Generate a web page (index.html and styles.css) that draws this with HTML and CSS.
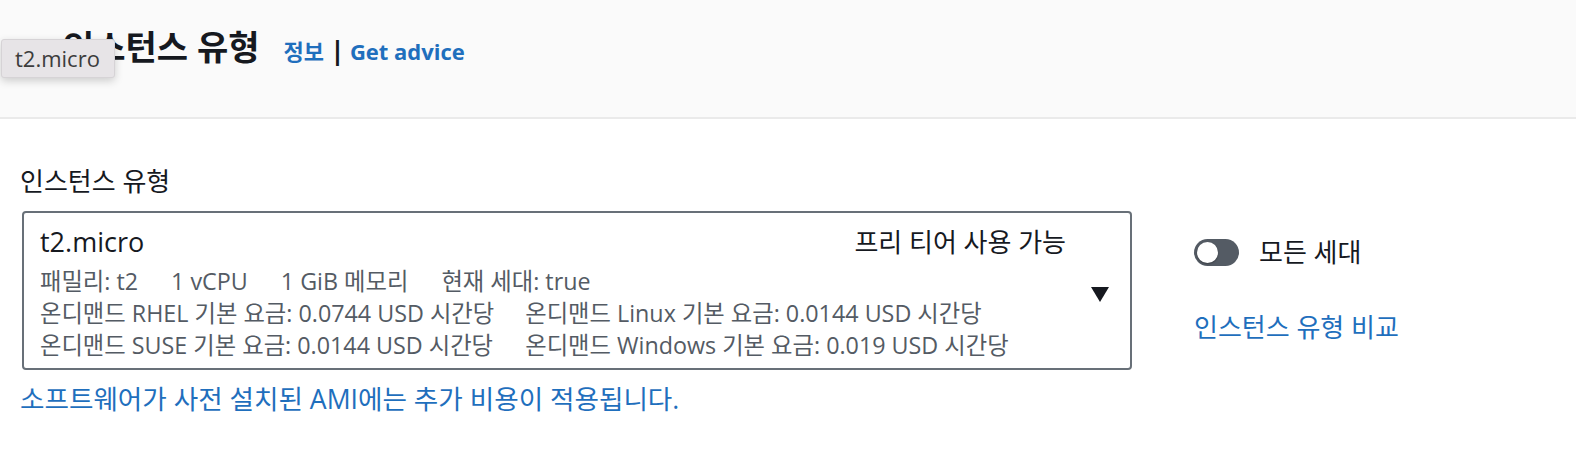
FILE: index.html
```html
<!DOCTYPE html>
<html lang="ko">
<head>
<meta charset="utf-8">
<link rel="stylesheet" href="styles.css">
</head>
<body>
<div class="page">
  <header class="header">
    <h2 class="heading">인스턴스 유형</h2>
    <a class="info-link" href="#">정보</a>
    <span class="sep">|</span>
    <a class="info-link" href="#">Get advice</a>
    <div class="tooltip">t2.micro</div>
  </header>
  <section class="content">
    <div class="field-label">인스턴스 유형</div>
    <div class="field-row">
      <div class="select">
        <div class="select-body">
          <div class="select-top">
            <span class="select-title">t2.micro</span>
            <span class="select-tag">프리 티어 사용 가능</span>
          </div>
          <div class="select-specs">
            <span>패밀리: t2</span>
            <span>1 vCPU</span>
            <span>1 GiB 메모리</span>
            <span>현재 세대: true</span>
          </div>
          <div class="select-prices">
            <span>온디맨드 RHEL 기본 요금: 0.0744 USD 시간당</span>
            <span>온디맨드 Linux 기본 요금: 0.0144 USD 시간당</span>
            <span>온디맨드 SUSE 기본 요금: 0.0144 USD 시간당</span>
            <span>온디맨드 Windows 기본 요금: 0.019 USD 시간당</span>
          </div>
        </div>
        <div class="caret">
          <svg width="18" height="15" viewBox="0 0 18 15"><path d="M0 0 H18 L9 15 Z" fill="#16191f"/></svg>
        </div>
      </div>
      <div class="side">
        <label class="toggle-row">
          <span class="toggle"><span class="knob"></span></span>
          <span class="toggle-text">모든 세대</span>
        </label>
        <a class="side-link" href="#">인스턴스 유형 비교</a>
      </div>
    </div>
    <a class="ami-link" href="#">소프트웨어가 사전 설치된 AMI에는 추가 비용이 적용됩니다.</a>
  </section>
</div>
</body>
</html>
```

FILE: styles.css
```css
* { box-sizing: border-box; }
body {
  margin: 0;
  background: #ffffff;
  font-family: "Open Sans", "Noto Sans CJK KR", sans-serif;
  color: #16191f;
}
a { text-decoration: none; color: #1f6fbd; }

.header {
  position: relative;
  height: 119px;
  background: #fafafa;
  border-bottom: 2px solid #eaeaea;
  display: flex;
  align-items: baseline;
  padding: 26px 0 0 63px;
}
.heading {
  margin: 0 24px 0 0;
  font-size: 34px;
  line-height: 42px;
  font-weight: 700;
}
.info-link {
  font-size: 22px;
  font-weight: 700;
}
.sep {
  font-size: 27px;
  font-weight: 700;
  margin: 0 5px 0 6px;
  color: #16191f;
}
.tooltip {
  position: absolute;
  left: 1px;
  top: 39px;
  width: 114px;
  height: 39px;
  background: #e7e4e7;
  border: 1px solid #d6d3d6;
  border-radius: 3px;
  box-shadow: 0 3px 8px rgba(0,0,0,0.18);
  color: #3c3c3c;
  font-size: 22px;
  line-height: 37px;
  padding-left: 13px;
}

.content {
  padding: 45px 20px 0 20px;
}
.field-label {
  font-size: 26px;
  line-height: 34px;
  margin-bottom: 13px;
}
.field-row {
  display: flex;
  align-items: flex-start;
  gap: 62px;
  padding-left: 2px;
}
.select {
  width: 1110px;
  height: 159px;
  border: 2px solid #687078;
  border-radius: 4px;
  display: flex;
  align-items: center;
  padding: 13px 21px 6px 16px;
}
.select-body {
  flex: 1;
  align-self: flex-start;
}
.select-top {
  display: flex;
  justify-content: space-between;
  font-size: 26px;
  line-height: 32px;
  padding-right: 25px;
}
.select-title {
  font-size: 27px;
  font-weight: 500;
}
.select-specs {
  display: flex;
  gap: 33px;
  margin-top: 7px;
}
.select-specs, .select-prices {
  font-size: 23.3px;
  line-height: 32px;
  color: #545b64;
}
.select-prices {
  display: grid;
  grid-template-columns: max-content max-content;
  column-gap: 31px;
}
.caret {
  display: flex;
  align-items: center;
}
.caret svg { display: block; }

.side {
  display: flex;
  flex-direction: column;
  padding-top: 27px;
  gap: 44px;
}
.toggle-row {
  display: flex;
  align-items: center;
  gap: 20px;
}
.toggle {
  width: 45px;
  height: 27px;
  border-radius: 14px;
  background: #545b64;
  position: relative;
  display: block;
}
.knob {
  position: absolute;
  left: 3px;
  top: 3px;
  width: 21px;
  height: 21px;
  border-radius: 50%;
  background: #ffffff;
  box-shadow: 0 1px 2px rgba(0,0,0,0.35);
}
.toggle-text {
  font-size: 26px;
  line-height: 28px;
}
.side-link {
  font-size: 26px;
  line-height: 34px;
}
.ami-link {
  display: inline-block;
  margin-top: 12px;
  font-size: 26.6px;
  line-height: 34px;
}
```
